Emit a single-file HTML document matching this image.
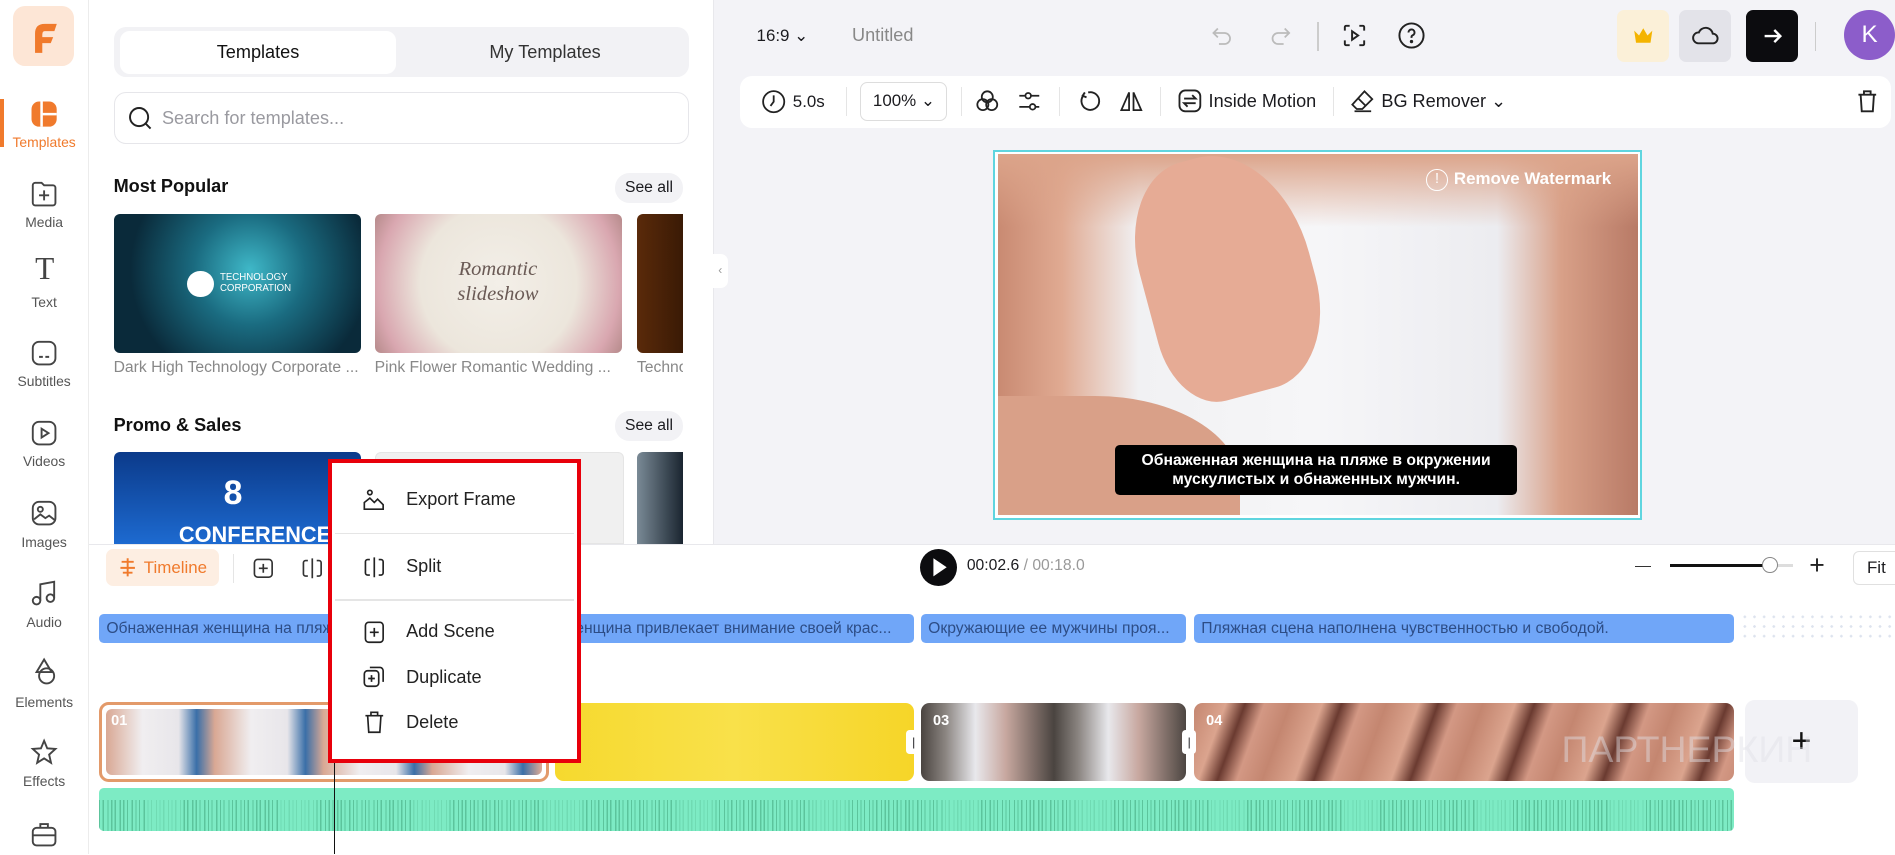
<!DOCTYPE html>
<html><head><meta charset="utf-8"><style>
*{box-sizing:border-box;margin:0;padding:0}
html,body{width:1895px;height:855px;overflow:hidden;background:#fff}
#w{zoom:1.20855;width:1568px;height:707px;position:relative;font-family:"Liberation Sans","DejaVu Sans",sans-serif;color:#1b1b1f}
.a{position:absolute}
.lbl{position:absolute;width:73px;text-align:center;font-size:11.5px;color:#555;left:0}
.ic{position:absolute;left:24px;width:25px;height:25px}
.t{font-size:13px;color:#888;white-space:nowrap;overflow:hidden}
.seg{position:absolute;top:508px;height:24px;background:#70a6f8;border-radius:4px;color:#2d4d86;font-size:13px;line-height:24px;padding-left:6px;white-space:nowrap;overflow:hidden}
.mi{position:absolute;left:336px;font-size:15px;color:#222}
.sv{position:absolute;left:299px}
</style></head><body><div id="w">
<!-- sidebar -->
<div class="a" style="left:0;top:0;width:74px;height:707px;border-right:1px solid #ececec;background:#fff"></div>
<div class="a" style="left:11px;top:5px;width:50px;height:50px;background:#fde6d6;border-radius:10px"></div>
<svg class="a" style="left:24px;top:16px" width="26" height="30" viewBox="0 0 26 30"><path d="M5 28 L5 12 Q5 4 13 4 L23 4 L21 10 L13 10 Q11 10 11 13 L11 15 L20 15 L18 20 L11 20 L11 28 Z" fill="#f07a2c"/></svg>
<div class="a" style="left:0;top:82px;width:3px;height:40px;background:#f07a2c"></div>
<svg class="ic" style="top:82px" viewBox="0 0 24 24"><rect x="2" y="2" width="20" height="20" rx="6" fill="#f07a2c"/><path d="M10 2v20M10 12h12" stroke="#fff" stroke-width="2"/></svg>
<div class="lbl" style="top:111px;color:#f07a2c">Templates</div>
<svg class="ic" style="top:148px" viewBox="0 0 24 24" fill="none" stroke="#444" stroke-width="1.5"><path d="M3 5a2 2 0 0 1 2-2h5l2 2h7a2 2 0 0 1 2 2v12a2 2 0 0 1-2 2H5a2 2 0 0 1-2-2z"/><path d="M12 9v8M8 13h8"/></svg>
<div class="lbl" style="top:177px">Media</div>
<div class="a" style="left:22px;top:208px;width:30px;text-align:center;font-family:'Liberation Serif',serif;font-size:26px;color:#444">T</div>
<div class="lbl" style="top:243px">Text</div>
<svg class="ic" style="top:280px" viewBox="0 0 24 24" fill="none" stroke="#444" stroke-width="1.5"><rect x="3" y="3" width="18" height="18" rx="5"/><path d="M8 15h3M13 15h3"/></svg>
<div class="lbl" style="top:309px">Subtitles</div>
<svg class="ic" style="top:346px" viewBox="0 0 24 24" fill="none" stroke="#444" stroke-width="1.5"><rect x="3" y="3" width="18" height="18" rx="5"/><path d="M10 8.5v7l5.5-3.5z"/></svg>
<div class="lbl" style="top:375px">Videos</div>
<svg class="ic" style="top:412px" viewBox="0 0 24 24" fill="none" stroke="#444" stroke-width="1.5"><rect x="3" y="3" width="18" height="18" rx="5"/><circle cx="9" cy="9" r="2"/><path d="M4 17l5-4 4 3 3-2 5 4"/></svg>
<div class="lbl" style="top:442px">Images</div>
<svg class="ic" style="top:478px" viewBox="0 0 24 24" fill="none" stroke="#444" stroke-width="1.5"><path d="M9 18V5l11-2v13"/><circle cx="6" cy="18" r="3"/><circle cx="17" cy="16" r="3"/></svg>
<div class="lbl" style="top:508px">Audio</div>
<svg class="ic" style="top:544px" viewBox="0 0 24 24" fill="none" stroke="#444" stroke-width="1.5"><path d="M12 2l-6 10h12z"/><circle cx="14" cy="15" r="6"/></svg>
<div class="lbl" style="top:574px">Elements</div>
<svg class="ic" style="top:610px" viewBox="0 0 24 24" fill="none" stroke="#444" stroke-width="1.5"><path d="M12 3l2.5 6 6.5.5-5 4.5 1.5 6.5L12 17l-5.5 3.5L8 14 3 9.5 9.5 9z"/></svg>
<div class="lbl" style="top:640px">Effects</div>
<svg class="ic" style="top:678px" viewBox="0 0 24 24" fill="none" stroke="#444" stroke-width="1.5"><rect x="3" y="7" width="18" height="14" rx="3"/><path d="M9 7V4h6v3M3 13h18"/></svg>

<!-- left panel -->
<div class="a" style="left:94px;top:22px;width:476px;height:42px;background:#f2f2f5;border-radius:10px"></div>
<div class="a" style="left:99px;top:26px;width:229px;height:35px;background:#fff;border-radius:8px;text-align:center;line-height:35px;font-size:15px;color:#111">Templates</div>
<div class="a" style="left:332px;top:26px;width:238px;height:35px;text-align:center;line-height:35px;font-size:15px;color:#333">My Templates</div>
<div class="a" style="left:94px;top:76px;width:476px;height:43px;border:1px solid #e6e6ea;border-radius:10px"></div>
<svg class="a" style="left:105px;top:87px" width="22" height="22" viewBox="0 0 22 22" fill="none" stroke="#222" stroke-width="1.6"><circle cx="10" cy="10" r="7.5"/><path d="M15.5 15.5l4 4"/></svg>
<div class="a" style="left:134px;top:89px;font-size:15px;color:#9a9aa0">Search for templates...</div>
<div class="a" style="left:94px;top:146px;font-size:15px;font-weight:bold;color:#111">Most Popular</div>
<div class="a" style="left:509px;top:143px;width:56px;height:25px;border-radius:12px;background:#f2f2f5;font-size:13px;line-height:25px;text-align:center">See all</div>
<div class="a" style="left:94px;top:177px;width:205px;height:115px;border-radius:5px;background:radial-gradient(circle at 55% 40%,#3fb8c8 0,#1a6b80 35%,#0a2a3a 75%)"></div>
<div class="a" style="left:155px;top:224px;width:22px;height:22px;border-radius:50%;background:#fff"></div>
<div class="a" style="left:182px;top:226px;font-size:8px;color:#fff;line-height:9px">TECHNOLOGY<br>CORPORATION</div>
<div class="a" style="left:310px;top:177px;width:205px;height:115px;border-radius:5px;background:radial-gradient(circle at 50% 50%,#f3efe8 0,#ece6dc 55%,#d9a7b0 85%,#b58a8a 100%)"></div>
<div class="a" style="left:362px;top:213px;font-family:'Liberation Serif',serif;font-style:italic;font-size:17px;color:#6a5a55;text-align:center;width:100px;line-height:20px">Romantic slideshow</div>
<div class="a" style="left:527px;top:177px;width:38px;height:115px;border-radius:5px 0 0 5px;background:linear-gradient(90deg,#5a2a0a,#3a1a05)"></div>
<div class="a t" style="left:94px;top:297px;width:207px">Dark High Technology Corporate ...</div>
<div class="a t" style="left:310px;top:297px;width:207px">Pink Flower Romantic Wedding ...</div>
<div class="a t" style="left:527px;top:297px;width:38px">Techno</div>
<div class="a" style="left:94px;top:343px;font-size:15px;font-weight:bold;color:#111">Promo &amp; Sales</div>
<div class="a" style="left:509px;top:340px;width:56px;height:25px;border-radius:12px;background:#f2f2f5;font-size:13px;line-height:25px;text-align:center">See all</div>
<div class="a" style="left:94px;top:374px;width:205px;height:76px;border-radius:5px 5px 0 0;background:linear-gradient(180deg,#0b3a8a,#1d6ad0)"></div>
<div class="a" style="left:185px;top:392px;font-size:28px;font-weight:bold;color:#fff">8</div>
<div class="a" style="left:148px;top:432px;font-size:18px;font-weight:bold;color:#fff">CONFERENCE</div>
<div class="a" style="left:310px;top:374px;width:206px;height:76px;border-radius:5px 5px 0 0;background:#f0f0f0;border:1px solid #e5e5e5"></div>
<div class="a" style="left:527px;top:374px;width:38px;height:76px;border-radius:5px 0 0 0;background:linear-gradient(90deg,#7a8a96,#1a2530)"></div>

<!-- right area -->
<div class="a" style="left:590px;top:0;width:978px;height:450px;background:#f3f3f7;border-left:1px solid #e8e8ec"></div>
<div class="a" style="left:590px;top:210px;width:12px;height:28px;background:#fff;border-radius:0 6px 6px 0;color:#999;font-size:10px;line-height:28px;text-align:center">‹</div>
<div class="a" style="left:626px;top:21px;font-size:14px">16:9 ⌄</div>
<div class="a" style="left:705px;top:21px;font-size:15px;color:#888">Untitled</div>
<svg class="a" style="left:1000px;top:19px" width="22" height="22" viewBox="0 0 24 24" fill="none" stroke="#bbb" stroke-width="1.6"><path d="M8 5L4 9l4 4M4 9h10a5 5 0 0 1 0 10H9"/></svg>
<svg class="a" style="left:1048px;top:19px" width="22" height="22" viewBox="0 0 24 24" fill="none" stroke="#bbb" stroke-width="1.6"><path d="M16 5l4 4-4 4M20 9H10a5 5 0 0 0 0 10h5"/></svg>
<div class="a" style="left:1090px;top:18px;width:1px;height:24px;background:#ccc"></div>
<svg class="a" style="left:1109px;top:17px" width="24" height="24" viewBox="0 0 24 24" fill="none" stroke="#222" stroke-width="1.6"><path d="M4 8V5a1 1 0 0 1 1-1h3M16 4h3a1 1 0 0 1 1 1v3M20 16v3a1 1 0 0 1-1 1h-3M8 20H5a1 1 0 0 1-1-1v-3"/><path d="M10 8.5v7l5-3.5z"/></svg>
<svg class="a" style="left:1156px;top:17px" width="24" height="24" viewBox="0 0 24 24" fill="none" stroke="#222" stroke-width="1.6"><circle cx="12" cy="12" r="10"/><path d="M9.5 9.5a2.5 2.5 0 1 1 3.5 2.3c-.7.3-1 .8-1 1.5v.7"/><circle cx="12" cy="17" r=".6" fill="#222"/></svg>
<div class="a" style="left:1338px;top:8px;width:43px;height:43px;border-radius:6px;background:#fbf0d8"></div>
<svg class="a" style="left:1351px;top:22px" width="17" height="14" viewBox="0 0 17 14"><path d="M1 3l4 4 3.5-6 3.5 6 4-4-1.5 10H2.5z" fill="#f4b400"/></svg>
<div class="a" style="left:1389px;top:8px;width:43px;height:43px;border-radius:6px;background:#e3e3e9"></div>
<svg class="a" style="left:1399px;top:20px" width="24" height="20" viewBox="0 0 24 20" fill="none" stroke="#222" stroke-width="1.6"><path d="M6 16h12a4 4 0 0 0 0-8 6 6 0 0 0-11.5-1A4.5 4.5 0 0 0 6 16z"/></svg>
<div class="a" style="left:1445px;top:8px;width:43px;height:43px;border-radius:6px;background:#0c0c0f"></div>
<svg class="a" style="left:1457px;top:20px" width="20" height="20" viewBox="0 0 20 20" fill="none" stroke="#fff" stroke-width="2"><path d="M3 10h13M11 5l5 5-5 5"/></svg>
<div class="a" style="left:1502px;top:18px;width:1px;height:24px;background:#ccc"></div>
<div class="a" style="left:1526px;top:8px;width:42px;height:42px;border-radius:50%;background:#8c5dca;color:#fff;font-size:20px;line-height:42px;text-align:center">K</div>

<div class="a" style="left:612px;top:63px;width:953px;height:43px;background:#fff;border-radius:10px"></div>
<svg class="a" style="left:630px;top:74px" width="21" height="21" viewBox="0 0 24 24" fill="none" stroke="#222" stroke-width="1.7"><circle cx="12" cy="12" r="10"/><path d="M12 6v6l-3 4"/></svg>
<div class="a" style="left:656px;top:76px;font-size:14px">5.0s</div>
<div class="a" style="left:700px;top:72px;width:1px;height:24px;background:#e5e5e5"></div>
<div class="a" style="left:712px;top:68px;width:72px;height:32px;border:1px solid #ddd;border-radius:6px;font-size:14px;line-height:30px;text-align:center">100% ⌄</div>
<div class="a" style="left:795px;top:72px;width:1px;height:24px;background:#e5e5e5"></div>
<svg class="a" style="left:806px;top:73px" width="22" height="22" viewBox="0 0 24 24" fill="none" stroke="#222" stroke-width="1.6"><circle cx="12" cy="8" r="5"/><circle cx="8" cy="15" r="5"/><circle cx="16" cy="15" r="5"/></svg>
<svg class="a" style="left:841px;top:73px" width="22" height="22" viewBox="0 0 24 24" fill="none" stroke="#222" stroke-width="1.6"><path d="M3 7h5M14 7h7M3 17h9M18 17h3"/><circle cx="11" cy="7" r="2.5"/><circle cx="15" cy="17" r="2.5"/></svg>
<div class="a" style="left:876px;top:72px;width:1px;height:24px;background:#e5e5e5"></div>
<svg class="a" style="left:890px;top:73px" width="22" height="22" viewBox="0 0 24 24" fill="none" stroke="#222" stroke-width="1.7"><path d="M8 4l-2 3 3.5 1.5"/><path d="M6.5 7A8 8 0 1 0 11 4"/></svg>
<svg class="a" style="left:925px;top:73px" width="22" height="22" viewBox="0 0 24 24" fill="none" stroke="#222" stroke-width="1.6"><path d="M10 4L3 20h7zM14 4l7 16h-7z"/></svg>
<div class="a" style="left:960px;top:72px;width:1px;height:24px;background:#e5e5e5"></div>
<svg class="a" style="left:973px;top:72px" width="23" height="23" viewBox="0 0 24 24" fill="none" stroke="#222" stroke-width="1.6"><rect x="3" y="3" width="18" height="18" rx="5"/><path d="M7 10h10l-3-3M17 14H7l3 3"/></svg>
<div class="a" style="left:1000px;top:75px;font-size:15px">Inside Motion</div>
<div class="a" style="left:1103px;top:72px;width:1px;height:24px;background:#e5e5e5"></div>
<svg class="a" style="left:1116px;top:73px" width="22" height="22" viewBox="0 0 24 24" fill="none" stroke="#222" stroke-width="1.6"><path d="M14 3l7 7-9 9H7l-4-4z"/><path d="M8 9l7 7M5 21h15"/></svg>
<div class="a" style="left:1143px;top:75px;font-size:15px">BG Remover ⌄</div>
<svg class="a" style="left:1534px;top:73px" width="22" height="22" viewBox="0 0 24 24" fill="none" stroke="#222" stroke-width="1.7"><path d="M4 6h16M9 6V3h6v3M6 6l1 15h10l1-15"/></svg>

<!-- canvas -->
<div class="a" style="left:822px;top:124px;width:537px;height:306px;border:2px solid #5fd5df;background:#fff;padding:2px">
 <div style="width:100%;height:100%;background:linear-gradient(90deg,#c98a72 0,#e0aa92 10%,#f1f1f3 22%,#f6f6f8 50%,#ececf0 78%,#d8a088 88%,#b87a66 100%);position:relative;overflow:hidden">
  <div style="position:absolute;left:0;top:0;right:0;height:60px;background:linear-gradient(180deg,#dca48a,rgba(220,164,138,0))"></div>
  <div style="position:absolute;left:0;top:200px;width:200px;height:120px;background:#d9a088;border-radius:0 60% 0 0"></div>
  <div style="position:absolute;left:120px;top:0;width:140px;height:200px;background:#e6ab95;border-radius:40% 50% 40% 30%;transform:rotate(-15deg)"></div>
 </div>
</div>
<div class="a" style="left:1180px;top:140px;width:18px;height:18px;border:1.5px solid #fff;border-radius:50%;color:#fff;font-size:12px;text-align:center;line-height:15px">!</div>
<div class="a" style="left:1203px;top:140px;font-size:14px;font-weight:bold;color:#fff">Remove Watermark</div>
<div class="a" style="left:923px;top:368px;width:332px;height:42px;background:#000;border-radius:4px;color:#fff;font-size:13px;font-weight:bold;text-align:center;line-height:16px;padding-top:5px">Обнаженная женщина на пляже в окружении<br>мускулистых и обнаженных мужчин.</div>

<!-- timeline -->
<div class="a" style="left:74px;top:450px;width:1494px;height:1px;background:#e8e8ec"></div>
<div class="a" style="left:88px;top:454px;width:93px;height:31px;background:#fdeee2;border-radius:6px;color:#f07a2c;font-size:14px;line-height:31px;padding-left:31px">Timeline</div>
<svg class="a" style="left:98px;top:461px" width="16" height="17" viewBox="0 0 16 17" fill="none" stroke="#f07a2c" stroke-width="1.6"><path d="M8 1v15M3 4h10M2 9h12M4 13h8"/></svg>
<div class="a" style="left:193px;top:458px;width:1px;height:24px;background:#e5e5e5"></div>
<svg class="a" style="left:207px;top:459px" width="22" height="22" viewBox="0 0 24 24" fill="none" stroke="#333" stroke-width="1.5"><rect x="4" y="4" width="16" height="16" rx="3"/><path d="M12 8v8M8 12h8"/></svg>
<svg class="a" style="left:247px;top:459px" width="22" height="22" viewBox="0 0 24 24" fill="none" stroke="#333" stroke-width="1.5"><path d="M8 5H6a2 2 0 0 0-2 2v10a2 2 0 0 0 2 2h2M16 5h2a2 2 0 0 1 2 2v10a2 2 0 0 1-2 2h-2M12 3v18"/></svg>
<div class="a" style="left:761px;top:454px;width:31px;height:31px;border-radius:50%;background:#0c0c0f"></div>
<svg class="a" style="left:770px;top:461px" width="14" height="17" viewBox="0 0 14 17"><path d="M2 1l11 7.5L2 16z" fill="#fff"/></svg>
<div class="a" style="left:800px;top:461px;font-size:13px">00:02.6 <span style="color:#999">/ 00:18.0</span></div>
<div class="a" style="left:1353px;top:468px;width:13px;height:1.5px;background:#333"></div>
<div class="a" style="left:1382px;top:467px;width:82px;height:2.5px;background:#111"></div>
<div class="a" style="left:1464px;top:467px;width:20px;height:2.5px;background:#ddd"></div>
<div class="a" style="left:1458px;top:461px;width:13px;height:13px;border-radius:50%;background:#fff;border:1.5px solid #888"></div>
<div class="a" style="left:1497px;top:455px;font-size:22px;color:#222;font-weight:300">+</div>
<div class="a" style="left:1533px;top:456px;width:40px;height:28px;border:1px solid #e0e0e0;border-radius:5px;font-size:14px;line-height:26px;padding-left:11px">Fit</div>

<!-- dotted area -->
<div class="a" style="left:1440px;top:506px;width:128px;height:24px;background-image:radial-gradient(#dde3ee 1px,transparent 1.2px);background-size:8px 8px"></div>
<div class="seg" style="left:82px;width:374px">Обнаженная женщина на пляже в окружении мускулистых</div>
<div class="seg" style="left:456px;width:300px;padding-left:20px">енщина привлекает внимание своей крас...</div>
<div class="seg" style="left:762px;width:219px">Окружающие ее мужчины проя...</div>
<div class="seg" style="left:988px;width:447px">Пляжная сцена наполнена чувственностью и свободой.</div>

<!-- video track -->
<div class="a" style="left:82px;top:581px;width:372px;height:66px;border:2.5px solid #e39a6a;border-radius:8px;padding:3px"><div style="width:100%;height:100%;border-radius:5px;background:repeating-linear-gradient(90deg,#d9a894 0,#f0eef0 30px,#e8e6ea 60px,#3a6fa8 75px,#d9a894 90px)"></div></div>
<div class="a" style="left:92px;top:590px;font-size:12px;font-weight:bold;color:#fff">01</div>
<div class="a" style="left:459px;top:582px;width:297px;height:64px;border-radius:7px;background:linear-gradient(90deg,#f6d92e,#f9e14a 50%,#f6d528)"></div>
<div class="a" style="left:762px;top:582px;width:219px;height:64px;border-radius:7px;background:repeating-linear-gradient(90deg,#4a4440 0,#8a8480 20px,#e8e8ec 45px,#c8a8a0 70px,#4a4440 110px)"></div>
<div class="a" style="left:772px;top:590px;font-size:12px;font-weight:bold;color:#fff">03</div>
<div class="a" style="left:988px;top:582px;width:447px;height:64px;border-radius:7px;background:repeating-linear-gradient(110deg,#c48670 0,#dba48e 25px,#6a3a30 40px,#d39884 55px,#c48670 75px)"></div>
<div class="a" style="left:998px;top:590px;font-size:12px;font-weight:bold;color:#fff">04</div>
<div class="a" style="left:750px;top:604px;width:12px;height:20px;background:#fff;border-radius:3px;font-size:10px;text-align:center;line-height:20px">|</div>
<div class="a" style="left:978px;top:604px;width:12px;height:20px;background:#fff;border-radius:3px;font-size:10px;text-align:center;line-height:20px">|</div>
<div class="a" style="left:1444px;top:579px;width:93px;height:69px;background:#f2f2f6;border-radius:8px;text-align:center;line-height:69px;font-size:28px;color:#111">+</div>
<div class="a" style="left:1292px;top:602px;font-size:31px;color:rgba(225,225,230,0.45);letter-spacing:0">ПАРТНЕРКИН</div>

<!-- audio -->
<div class="a" style="left:82px;top:652px;width:1353px;height:36px;border-radius:4px;background:#7debc4;overflow:hidden">
<div style="position:absolute;left:0;bottom:0;width:100%;height:26px;background:repeating-linear-gradient(90deg,#5cc49c 0 1px,transparent 1px 3px,#5cc49c 3px 4px,transparent 4px 7px,#5cc49c 7px 8px,transparent 8px 10px);-webkit-mask:repeating-linear-gradient(90deg,#000 0 40px,rgba(0,0,0,.4) 40px 70px,#000 70px 110px)"></div>
</div>

<!-- playhead -->
<div class="a" style="left:276px;top:485px;width:1.5px;height:222px;background:#111"></div>

<!-- context menu -->
<div class="a" style="left:271px;top:380px;width:210px;height:251px;border:4px solid #e8000b;background:#fff"></div>
<div class="a" style="left:277px;top:441px;width:198px;height:1px;background:#e5e5e5"></div>
<div class="a" style="left:277px;top:496px;width:198px;height:1px;background:#e5e5e5"></div>
<svg class="sv" style="top:403px" width="22" height="22" viewBox="0 0 24 24" fill="none" stroke="#222" stroke-width="1.5"><circle cx="8" cy="5" r="2"/><path d="M3 20V14l5-4 4 4 3-3 5 5v4z"/></svg>
<div class="mi" style="top:405px">Export Frame</div>
<svg class="sv" style="top:458px" width="22" height="22" viewBox="0 0 24 24" fill="none" stroke="#222" stroke-width="1.5"><path d="M8 5H6a2 2 0 0 0-2 2v10a2 2 0 0 0 2 2h2M16 5h2a2 2 0 0 1 2 2v10a2 2 0 0 1-2 2h-2M12 3v18"/></svg>
<div class="mi" style="top:460px">Split</div>
<svg class="sv" style="top:512px" width="22" height="22" viewBox="0 0 24 24" fill="none" stroke="#222" stroke-width="1.5"><rect x="4" y="3" width="16" height="18" rx="3"/><path d="M12 8v8M8 12h8"/></svg>
<div class="mi" style="top:514px">Add Scene</div>
<svg class="sv" style="top:549px" width="22" height="22" viewBox="0 0 24 24" fill="none" stroke="#222" stroke-width="1.5"><rect x="3" y="7" width="13" height="14" rx="3"/><path d="M8 4h9a3 3 0 0 1 3 3v10M9.5 11v6M6.5 14h6"/></svg>
<div class="mi" style="top:552px">Duplicate</div>
<svg class="sv" style="top:587px" width="22" height="22" viewBox="0 0 24 24" fill="none" stroke="#222" stroke-width="1.5"><path d="M4 6h16M9 6V3h6v3M6 6l1 15h10l1-15"/></svg>
<div class="mi" style="top:589px">Delete</div>
</div></body></html>
